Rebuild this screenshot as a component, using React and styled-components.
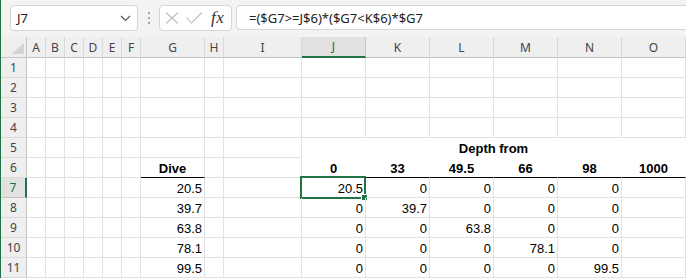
import styled, { createGlobalStyle } from 'styled-components';

const GlobalStyle = createGlobalStyle`
  html, body {
    margin: 0;
    padding: 0;
    background: #fff;
    overflow: hidden;
  }
`;

const Frame = styled.div`
  width: 685px;
  height: 278px;
  border-left: 1px solid #217346;
  display: flex;
  flex-direction: column;
  font-family: 'Noto Sans', 'Liberation Sans', sans-serif;
  overflow: hidden;
`;

const Toolbar = styled.div`
  height: 37px;
  flex: none;
  background: #f3f3f3;
  display: flex;
  align-items: flex-start;
  padding: 5px 0 0 9px;
  box-sizing: border-box;
`;

const NameBox = styled.div`
  width: 128px;
  height: 26px;
  box-sizing: border-box;
  background: #fff;
  border: 1px solid #d6d6d6;
  border-radius: 4px;
  display: flex;
  align-items: center;
  justify-content: space-between;
  padding: 0 6px 0 6px;
  font-size: 13px;
  color: #222;
`;

const Dots = styled.div`
  width: 21px;
  height: 26px;
  display: flex;
  flex-direction: column;
  align-items: center;
  justify-content: center;
  gap: 3px;

  span {
    width: 2px;
    height: 2px;
    background: #8a8a8a;
    border-radius: 1px;
  }
`;

const ButtonGroup = styled.div`
  width: 73px;
  height: 26px;
  box-sizing: border-box;
  background: #fff;
  border: 1px solid #d6d6d6;
  border-radius: 4px;
  display: flex;
  align-items: center;
  padding-left: 4px;
  gap: 5px;
`;

const Fx = styled.span`
  font-family: 'Liberation Serif', serif;
  font-style: italic;
  font-size: 17px;
  color: #333;
  margin-left: 3px;
  letter-spacing: 0.5px;
`;

const FormulaBox = styled.div`
  flex: 1;
  margin-left: 4px;
  margin-right: -8px;
  height: 25px;
  box-sizing: border-box;
  background: #fff;
  border: 1px solid #d6d6d6;
  border-radius: 4px;
  display: flex;
  align-items: center;
  padding-left: 12px;
  font-size: 13px;
  color: #222;
  white-space: nowrap;
`;

const Sheet = styled.div`
  display: grid;
  grid-template-columns: 26px repeat(6, 19px) 64px 19px 78px repeat(6, 64px);
  grid-template-rows: 21px repeat(11, 20px);
`;

const Corner = styled.div`
  background: #efefef;
  border-right: 1px solid #c4c4c4;
  border-bottom: 1px solid #c4c4c4;
  box-sizing: border-box;
  display: flex;
  align-items: flex-end;
  justify-content: flex-end;
  padding: 0 2px 3px 0;
`;

const ColHead = styled.div`
  background: ${(p) => (p.$active ? '#e1e1e1' : '#efefef')};
  border-right: 1px solid ${(p) => (p.$active ? '#c4c4c4' : '#dadada')};
  border-bottom: ${(p) => (p.$active ? '2px solid #217346' : '1px solid #c4c4c4')};
  box-sizing: border-box;
  display: flex;
  align-items: center;
  justify-content: center;
  font-size: 12px;
  color: ${(p) => (p.$active ? '#1e6b41' : '#444')};
`;

const RowHead = styled.div`
  background: ${(p) => (p.$active ? '#e1e1e1' : '#efefef')};
  border-right: ${(p) => (p.$active ? '2px solid #217346' : '1px solid #c4c4c4')};
  border-bottom: 1px solid ${(p) => (p.$active ? '#c4c4c4' : '#dadada')};
  box-sizing: border-box;
  display: flex;
  align-items: center;
  justify-content: center;
  font-size: 12px;
  color: ${(p) => (p.$active ? '#1e6b41' : '#444')};
`;

const Cell = styled.div`
  position: relative;
  grid-column: ${(p) => (p.$span ? `span ${p.$span}` : 'auto')};
  border-right: 1px solid ${(p) => (p.$plain ? '#fff' : '#e1e1e1')};
  border-bottom: 1px solid ${(p) => (p.$line ? '#000' : p.$plain ? '#fff' : '#e1e1e1')};
  box-sizing: border-box;
  display: flex;
  align-items: center;
  justify-content: ${(p) =>
    p.$align === 'right' ? 'flex-end' : p.$align === 'center' ? 'center' : 'flex-start'};
  padding: 1px 2px 0 2px;
  font-family: 'Liberation Sans', Arial, sans-serif;
  font-size: 13px;
  font-weight: ${(p) => (p.$bold ? 700 : 400)};
  color: #000;
  white-space: nowrap;
`;

const Selection = styled.div`
  position: absolute;
  top: -2px;
  left: -2px;
  right: -1px;
  bottom: -2px;
  border: 2px solid #217346;
  pointer-events: none;

  &::after {
    content: '';
    position: absolute;
    right: -4px;
    bottom: -4px;
    width: 5px;
    height: 5px;
    background: #217346;
    border: 1px solid #fff;
  }
`;

const columns = ['A', 'B', 'C', 'D', 'E', 'F', 'G', 'H', 'I', 'J', 'K', 'L', 'M', 'N', 'O'];

const dive = [20.5, 39.7, 63.8, 78.1, 99.5];
const depthFrom = ['0', '33', '49.5', '66', '98', '1000'];

function Chevron() {
  return (
    <svg width="11" height="7" viewBox="0 0 11 7">
      <path d="M1 1 L5.5 5.5 L10 1" fill="none" stroke="#555" strokeWidth="1.2" />
    </svg>
  );
}

function Cross() {
  return (
    <svg width="16" height="14" viewBox="0 0 16 14">
      <path d="M2 1.5 L14 12.5 M14 1.5 L2 12.5" fill="none" stroke="#bdbdbd" strokeWidth="1.1" />
    </svg>
  );
}

function Tick() {
  return (
    <svg width="18" height="14" viewBox="0 0 18 14">
      <path d="M1.5 6.5 L6.5 12 L17 1.5" fill="none" stroke="#bdbdbd" strokeWidth="1.1" />
    </svg>
  );
}

function CornerMark() {
  return (
    <svg width="13" height="11" viewBox="0 0 13 11">
      <polygon points="13,0 13,11 0,11" fill="#d4d4d4" />
    </svg>
  );
}

function renderRow(r) {
  const cells = [];
  columns.forEach((c, i) => {
    const key = `${c}${r}`;
    if (r === 5 && c === 'J') {
      cells.push(
        <Cell key={key} $span={6} $align="center" $bold $plain>
          Depth from
        </Cell>
      );
      return;
    }
    if (r === 5 && i > 9) return;
    if (r === 6 && c === 'G') {
      cells.push(
        <Cell key={key} $align="center" $bold $line>
          Dive
        </Cell>
      );
      return;
    }
    if (r === 6 && i >= 9) {
      cells.push(
        <Cell key={key} $align="center" $bold $line $plain>
          {depthFrom[i - 9]}
        </Cell>
      );
      return;
    }
    if (r >= 7 && c === 'G') {
      cells.push(
        <Cell key={key} $align="right">
          {dive[r - 7]}
        </Cell>
      );
      return;
    }
    if (r >= 7 && i >= 9 && i <= 13) {
      const value = i - 9 === r - 7 ? dive[r - 7] : 0;
      cells.push(
        <Cell key={key} $align="right">
          {value}
          {r === 7 && c === 'J' && <Selection />}
        </Cell>
      );
      return;
    }
    cells.push(<Cell key={key} />);
  });
  return cells;
}

export default function App() {
  const rows = Array.from({ length: 11 }, (_, i) => i + 1);

  return (
    <>
      <GlobalStyle />
      <Frame>
        <Toolbar>
          <NameBox>
            <span>J7</span>
            <Chevron />
          </NameBox>
          <Dots>
            <span />
            <span />
            <span />
          </Dots>
          <ButtonGroup>
            <Cross />
            <Tick />
            <Fx>fx</Fx>
          </ButtonGroup>
          <FormulaBox>=($G7&gt;=J$6)*($G7&lt;K$6)*$G7</FormulaBox>
        </Toolbar>
        <Sheet>
          <Corner>
            <CornerMark />
          </Corner>
          {columns.map((c) => (
            <ColHead key={c} $active={c === 'J'}>
              {c}
            </ColHead>
          ))}
          {rows.map((r) => [
            <RowHead key={`h${r}`} $active={r === 7}>
              {r}
            </RowHead>,
            ...renderRow(r),
          ])}
        </Sheet>
      </Frame>
    </>
  );
}
